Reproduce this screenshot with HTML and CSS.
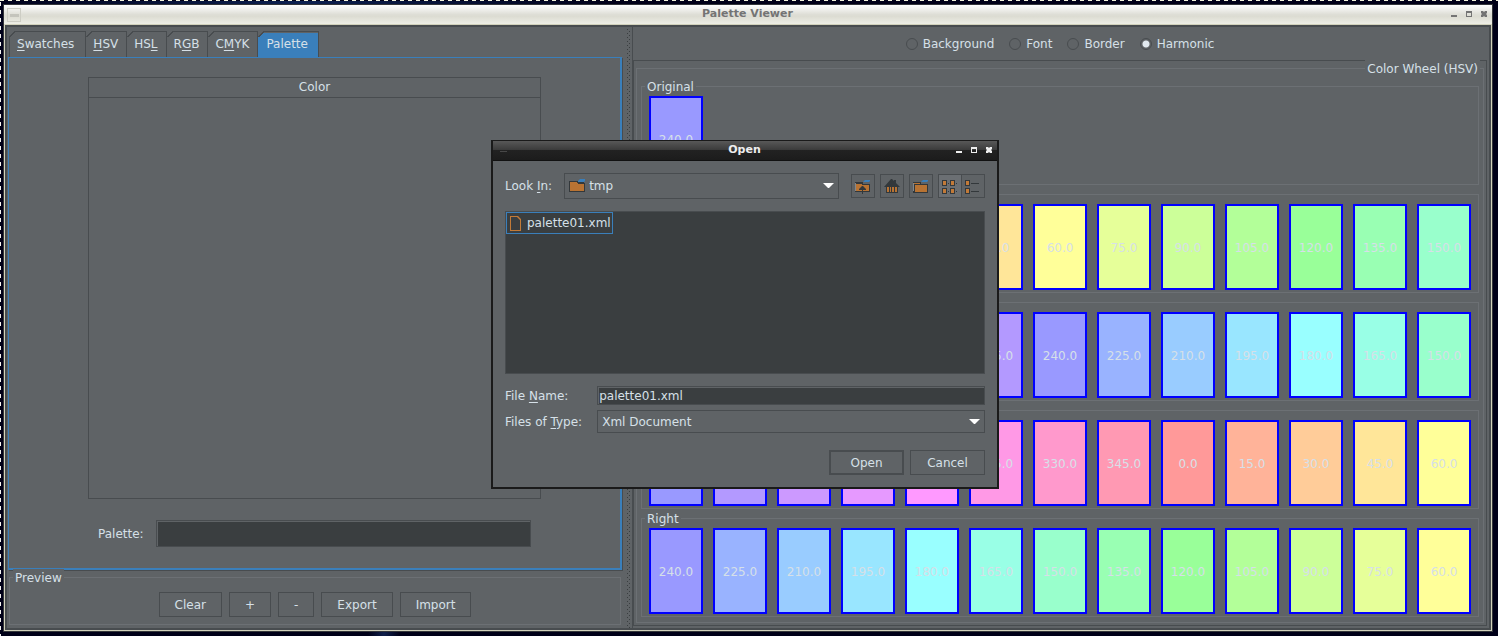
FILE: index.html
```html
<!DOCTYPE html>
<html lang="en">
<head>
<meta charset="utf-8">
<title>Palette Viewer</title>
<link rel="stylesheet" href="styles.css">
</head>
<body class="desktop">
<main class="window">
  <header class="titlebar">
    <span class="app-icon"></span>
    <h1 class="title">Palette Viewer</h1>
    <div class="window-controls">
      <button type="button" aria-label="Minimize"><svg width="7" height="7"><path d="M0 4h6v2H0z"/></svg></button>
      <button type="button" aria-label="Maximize"><svg width="7" height="7"><path fill-rule="evenodd" d="M0 0h6v6H0zM1 2v3h4V2z"/></svg></button>
      <button type="button" aria-label="Close"><svg width="7" height="7"><path d="M0 0h2l1 1 1-1h2v2L5 3l1 1v2H4L3 5 2 6H0V4l1-1-1-1z"/></svg></button>
    </div>
  </header>

  <div class="client">
    <section class="left-pane">
      <div class="tabs" role="tablist">
        <button type="button" class="tab" role="tab"><u>S</u>watches</button>
        <button type="button" class="tab" role="tab"><u>H</u>SV</button>
        <button type="button" class="tab" role="tab">HS<u>L</u></button>
        <button type="button" class="tab" role="tab">R<u>G</u>B</button>
        <button type="button" class="tab" role="tab">C<u>M</u>YK</button>
        <button type="button" class="tab selected" role="tab" aria-selected="true">Palette</button>
      </div>
      <div class="tab-panel" role="tabpanel">
        <div class="table-scroll">
          <table class="color-table"><thead><tr><th>Color</th></tr></thead></table>
        </div>
        <div class="palette-row">
          <label for="palette-name">Palette:</label>
          <input id="palette-name" class="field" type="text">
        </div>
      </div>
      <section class="titled preview">
        <h2 class="legend">Preview</h2>
        <button type="button" class="btn">Clear</button>
        <button type="button" class="btn">+</button>
        <button type="button" class="btn">-</button>
        <button type="button" class="btn">Export</button>
        <button type="button" class="btn">Import</button>
      </section>
    </section>

    <div class="divider"></div>

    <section class="right-pane">
      <div class="modes">
        <label><input type="radio" name="mode">Background</label>
        <label><input type="radio" name="mode">Font</label>
        <label><input type="radio" name="mode">Border</label>
        <label><input type="radio" name="mode" checked>Harmonic</label>
      </div>
      <div class="wheel-scroll">
        <section class="titled wheel">
          <h2 class="legend legend-right">Color Wheel (HSV)</h2>
          <section class="titled group" data-start="240" data-step="0" data-count="1" data-label-from="0"><h3 class="legend">Original</h3></section>
          <section class="titled group" data-start="330" data-step="15" data-count="13" data-label-from="5"></section>
          <section class="titled group" data-start="330" data-step="-15" data-count="13" data-label-from="5"></section>
          <section class="titled group" data-start="240" data-step="15" data-count="13" data-label-from="5"></section>
          <section class="titled group" data-start="240" data-step="-15" data-count="13" data-label-from="0"><h3 class="legend">Right</h3></section>
        </section>
      </div>
    </section>
  </div>
</main>

<div class="dialog" role="dialog" aria-labelledby="dialog-title">
  <header class="titlebar titlebar-dark">
    <span class="app-icon"></span>
    <h2 class="title" id="dialog-title">Open</h2>
    <div class="window-controls">
      <button type="button" aria-label="Minimize"><svg width="7" height="7"><path d="M0 4h6v2H0z"/></svg></button>
      <button type="button" aria-label="Maximize"><svg width="7" height="7"><path fill-rule="evenodd" d="M0 0h6v6H0zM1 2v3h4V2z"/></svg></button>
      <button type="button" aria-label="Close"><svg width="7" height="7"><path d="M0 0h2l1 1 1-1h2v2L5 3l1 1v2H4L3 5 2 6H0V4l1-1-1-1z"/></svg></button>
    </div>
  </header>
  <form class="dialog-body">
    <div class="look-row">
      <label for="look-in">Look <u>I</u>n:</label>
      <div class="combo combo-folder">
        <select id="look-in"><option>tmp</option></select>
        <svg class="combo-icon" width="17" height="14"><path fill="#33383b" d="M0 2h10v2h6v9H0z"/><path fill="#b87333" d="M1 3h8v2h6v7H1z"/><path fill="#33383b" d="M8 3h7v1H8z"/><path fill="#3a7fbb" d="M9 2l2-2h5v2l-1 1H9z"/></svg>
        <svg class="arrow" width="11" height="6"><path fill="#fff" d="M0 0h11L6 5H5z"/></svg>
      </div>
      <div class="tools">
        <button type="button" class="tool" aria-label="Up one level"><svg width="16" height="16"><path fill="#33383b" d="M0 3h8v2h7v8H0z"/><path fill="#85888a" d="M0 4h1v8H0z"/><path fill="#b87333" d="M1 5h6v1h7v6H1z"/><path fill="#3a7fbb" d="M8 3l2-2h5v1l-1 1z"/><path fill="#33383b" d="M7 7h1l3 3v1H8v4H7v-4H4v-1z"/></svg></button>
        <button type="button" class="tool" aria-label="Home"><svg width="16" height="16"><path fill="#33383b" d="M7 0h1l2 2V1h2v3l4 4h-2v6H2V8H0z"/><path fill="#b87333" d="M3 8h10v5h-2V7H5v6H3z"/><path fill="#33383b" d="M5 7h6v7H5z"/><path fill="#b87333" d="M6 8h1v5H6zM8 8h2v5H8z"/></svg></button>
        <button type="button" class="tool" aria-label="New folder"><svg width="16" height="16"><path fill="#33383b" d="M0 3h8v2h7v9H0z"/><path fill="#85888a" d="M0 4h1v8H0z"/><path fill="#b87333" d="M2 6h12v7H2zM1 4h6v1H1z"/><path fill="#3a7fbb" d="M8 3l2-2h5v1l-1 1z"/></svg></button>
        <span class="tool-pair">
          <button type="button" class="tool pressed" aria-label="List"><svg width="16" height="16"><path fill="#33383b" d="M0 1h5v6H0zM8 1h5v6H8zM0 9h5v6H0zM8 9h5v6H8zM6 4h1v1H6zM14 4h1v1h-1zM6 12h1v1H6zM14 12h1v1h-1z"/><path fill="#c27a38" d="M1 2h3v4H1zM9 2h3v4H9zM1 10h3v4H1zM9 10h3v4H9z"/></svg></button>
          <button type="button" class="tool" aria-label="Details"><svg width="16" height="16"><path fill="#33383b" d="M0 1h5v6H0zM0 9h5v6H0zM6 4h8v1H6zM6 12h8v1H6z"/><path fill="#c27a38" d="M1 2h3v4H1zM1 10h3v4H1z"/></svg></button>
        </span>
      </div>
    </div>
    <ul class="files">
      <li class="file"><svg width="11" height="15"><path fill="#c27a38" fill-rule="evenodd" d="M0 0h8l3 3v12H0zM1 1v13h9V4L7 1z"/></svg>palette01.xml</li>
    </ul>
    <div class="form-grid">
      <label for="file-name">File <u>N</u>ame:</label>
      <input id="file-name" class="field" type="text" value="palette01.xml">
      <label for="file-type">Files of <u>T</u>ype:</label>
      <div class="combo">
        <select id="file-type"><option>Xml Document</option></select>
        <svg class="arrow" width="11" height="6"><path fill="#fff" d="M0 0h11L6 5H5z"/></svg>
      </div>
    </div>
    <div class="actions">
      <button type="button" class="btn btn-default">Open</button>
      <button type="button" class="btn">Cancel</button>
    </div>
  </form>
</div>
<script src="swatches.js"></script>
</body>
</html>
```

FILE: styles.css
```css
:root {
  --panel: #5f6366;
  --line: #484c4f;
  --etch: #6c7074;
  --dark: #3a3e40;
  --blue: #3a7fbb;
  --text: #d6e0e8;
}

* { box-sizing: border-box; }

.desktop {
  position: relative;
  min-height: 100vh;
  margin: 0;
  padding: 4px 5px 4px 3px;
  display: flex;
  overflow: hidden;
  color: var(--text);
  font: 12px/18px "DejaVu Sans", sans-serif;
  background:
    repeating-linear-gradient(to right, #f4f4dc 0 4px, #000018 4px 8px) 0 0 / 100% 1px no-repeat,
    repeating-linear-gradient(to bottom, #f4f4f0 0 4px, #000018 4px 8px) 0 2px / 1px 100% no-repeat,
    radial-gradient(circle at 384px 634px, #10204c 0, transparent 16px),
    radial-gradient(ellipse at 300px 0, #0c2050 0, transparent 320px),
    #000018;
}

button, input, select { font: inherit; color: inherit; }
button { background: none; border: 0; padding: 0; }
h1, h2, h3 { margin: 0; font-size: 12px; font-weight: normal; }
u { text-underline-offset: 2px; }
svg { flex: none; }

.window {
  flex: 1;
  min-width: 0;
  display: flex;
  flex-direction: column;
  border: 1px solid #34363a;
  background: var(--panel);
}

.titlebar {
  display: grid;
  grid-template-columns: 1fr auto 1fr;
  align-items: center;
  height: 20px;
  padding: 0 4px 0 3px;
  color: #747474;
  background: linear-gradient(#fff, #deded6 50%, #dcdcd2 60%, #eeeee6);
  border-bottom: 1px solid #c8c8aa;
}
.title { font-size: 11px; line-height: 16px; font-weight: bold; padding-bottom: 1px; }
.app-icon { width: 14px; height: 14px; border: 1px solid #cdcdc4; background: linear-gradient(#c4c4bc, #c4c4bc) 2px 5px / 9px 3px no-repeat; }
.window-controls { display: flex; justify-content: flex-end; gap: 8px; }
.window-controls button { width: 7px; height: 7px; display: flex; }
.window-controls svg { fill: currentColor; }

.client {
  flex: 1;
  display: grid;
  grid-template-columns: minmax(0, 616fr) 9px minmax(0, 857fr);
  border: 2px solid var(--line);
  outline: 1px solid #d2d2bc;
  margin: 0 1px 1px;
}

.left-pane { display: flex; flex-direction: column; padding: 4px 1px 3px; }
.tabs { display: flex; padding-left: 1px; }
.tab {
  height: 26px;
  padding: 0 8px 0 7px;
  border-right: 1px solid var(--line);
  background:
    linear-gradient(135deg, transparent 4px, var(--line) 4px 5px, transparent 5px) 0 0 / 6px 6px no-repeat,
    linear-gradient(var(--line), var(--line)) 5px 0 / 100% 1px no-repeat;
}
.tab:first-child {
  padding: 0 11px 0 8px;
  background:
    linear-gradient(135deg, transparent 4px, var(--line) 4px 5px, transparent 5px) 0 0 / 6px 6px no-repeat,
    linear-gradient(var(--line), var(--line)) 5px 0 / 100% 1px no-repeat,
    linear-gradient(var(--line), var(--line)) 0 5px / 1px 100% no-repeat;
}
.selected {
  padding: 0 10px 0 8px;
  background:
    linear-gradient(135deg, var(--panel) 4px, var(--line) 4px 5px, transparent 5px) 0 0 / 6px 6px no-repeat,
    linear-gradient(var(--line), var(--line)) 5px 0 / 100% 1px no-repeat,
    linear-gradient(var(--panel), var(--panel)) 0 1px / 100% 1px no-repeat,
    var(--blue);
}
.tab-panel {
  flex: 1;
  display: flex;
  flex-direction: column;
  gap: 21px;
  padding: 19px 79px 21px;
  border: solid var(--blue);
  border-width: 1px 2px 2px 1px;
  box-shadow: 1px 1px var(--line);
}
.table-scroll { flex: 1; border: 1px solid var(--line); }
.color-table { width: 100%; border-collapse: collapse; }
.color-table th { height: 19px; padding: 0; font-weight: normal; border-bottom: 1px solid var(--line); }
.palette-row { display: flex; align-items: center; gap: 12px; padding: 0 10px; }
.palette-row .field { flex: 1; min-width: 0; height: 27px; }
.field {
  padding: 0 1px;
  border: 1px solid var(--line);
  border-radius: 0;
  background: var(--dark);
  box-shadow: inset 1px 1px var(--panel);
}

.titled { position: relative; border: 1px solid var(--etch); }
.legend { position: absolute; top: -9px; left: 3px; padding: 0 2px; line-height: 18px; background: var(--panel); }
.legend-right { left: auto; right: 3px; }
.preview { display: flex; justify-content: center; gap: 7px; margin: 7px 1px 0; padding: 14px 0 7px; }
.btn { height: 25px; padding: 0 15px; border: 1px solid var(--line); }

.divider {
  background:
    repeating-linear-gradient(var(--dark) 0 1px, transparent 1px 4px) 4px 2px / 1px 100% no-repeat,
    repeating-linear-gradient(var(--dark) 0 1px, transparent 1px 4px) 6px 4px / 1px 100% no-repeat;
}

.right-pane { display: flex; flex-direction: column; padding: 0 2px 2px 0; border-left: 1px solid var(--line); }
.modes { flex: 1; min-height: 33px; display: flex; justify-content: center; align-items: center; gap: 15px; }
.modes label { display: flex; align-items: center; gap: 5px; }
.modes input {
  appearance: none;
  width: 12px;
  height: 12px;
  margin: 0;
  border: 1px solid var(--line);
  border-radius: 50%;
}
.modes input:checked { background: radial-gradient(circle, #e0e8ee 3px, transparent 4px); }
.wheel-scroll { border: 1px solid var(--line); padding: 7px 2px 2px; }
.wheel { display: flex; flex-direction: column; gap: 9px; padding: 17px 4px 5px; }
.group {
  display: grid;
  grid-template-columns: repeat(13, minmax(0, 1fr));
  gap: 10px;
  padding: 9px 7px 2px;
}
.swatch {
  height: 86px;
  padding-top: 2px;
  display: flex;
  align-items: center;
  justify-content: center;
  border: 2px solid #00f;
}

.dialog {
  position: absolute;
  top: 140px;
  left: 491px;
  width: 508px;
  border: solid #1a1a1a;
  border-width: 1px 2px 2px;
  background: var(--panel);
}
.titlebar-dark {
  color: #eee;
  background: linear-gradient(#585858, #3c3c3c 45%, #222 46%, #1c1c1c);
  border-bottom: 1px solid #111;
}
.titlebar-dark .app-icon { border-color: transparent; background: linear-gradient(#484848, #484848) 3px 6px / 7px 1px no-repeat; }
.dialog-body { padding: 12px; }
.look-row { display: flex; align-items: center; gap: 12px; }
.combo { position: relative; flex: 1; display: flex; }
.combo select {
  appearance: none;
  flex: 1;
  height: 23px;
  padding: 0 4px;
  border: 1px solid var(--line);
  border-radius: 0;
  background: transparent;
}
.combo-folder select { height: 26px; padding-left: 24px; }
.combo-icon { position: absolute; left: 5px; top: 6px; }
.arrow { position: absolute; right: 5px; top: 50%; margin-top: -3px; }
.tools { display: flex; gap: 5px; }
.tool-pair { display: flex; }
.tool { display: flex; align-items: center; justify-content: center; width: 24px; height: 24px; padding-top: 1px; border: 1px solid var(--line); }
.tool-pair .tool + .tool { margin-left: -1px; }
.pressed { background: #6b6f73; }
.files { height: 163px; margin: 12px 0; padding: 0; list-style: none; border: 1px solid var(--line); background: var(--dark); }
.file { display: flex; align-items: center; gap: 6px; width: max-content; height: 22px; padding: 0 1px 0 3px; border: 1px solid var(--blue); }
.form-grid { display: grid; grid-template-columns: auto 1fr; align-items: center; gap: 5px 15px; }
.form-grid .field { min-width: 0; height: 19px; }
.actions { display: flex; justify-content: flex-end; gap: 6px; margin-top: 17px; }
.actions .btn { width: 75px; padding: 0; }
.actions .btn-default { border-width: 2px; }
```

FILE: swatches.js
```js
document.querySelectorAll(".group").forEach(function (group) {
  var start = Number(group.dataset.start);
  var step = Number(group.dataset.step);
  var count = Number(group.dataset.count);
  var labelFrom = Number(group.dataset.labelFrom);
  for (var i = 0; i < count; i++) {
    var hue = (start + step * i + 360) % 360;
    var swatch = document.createElement("div");
    swatch.className = "swatch";
    swatch.style.background = "hsl(" + hue + " 100% 80%)";
    // Swatches behind the dialog carry no label.
    if (i >= labelFrom) swatch.textContent = hue.toFixed(1);
    group.appendChild(swatch);
  }
});
```
